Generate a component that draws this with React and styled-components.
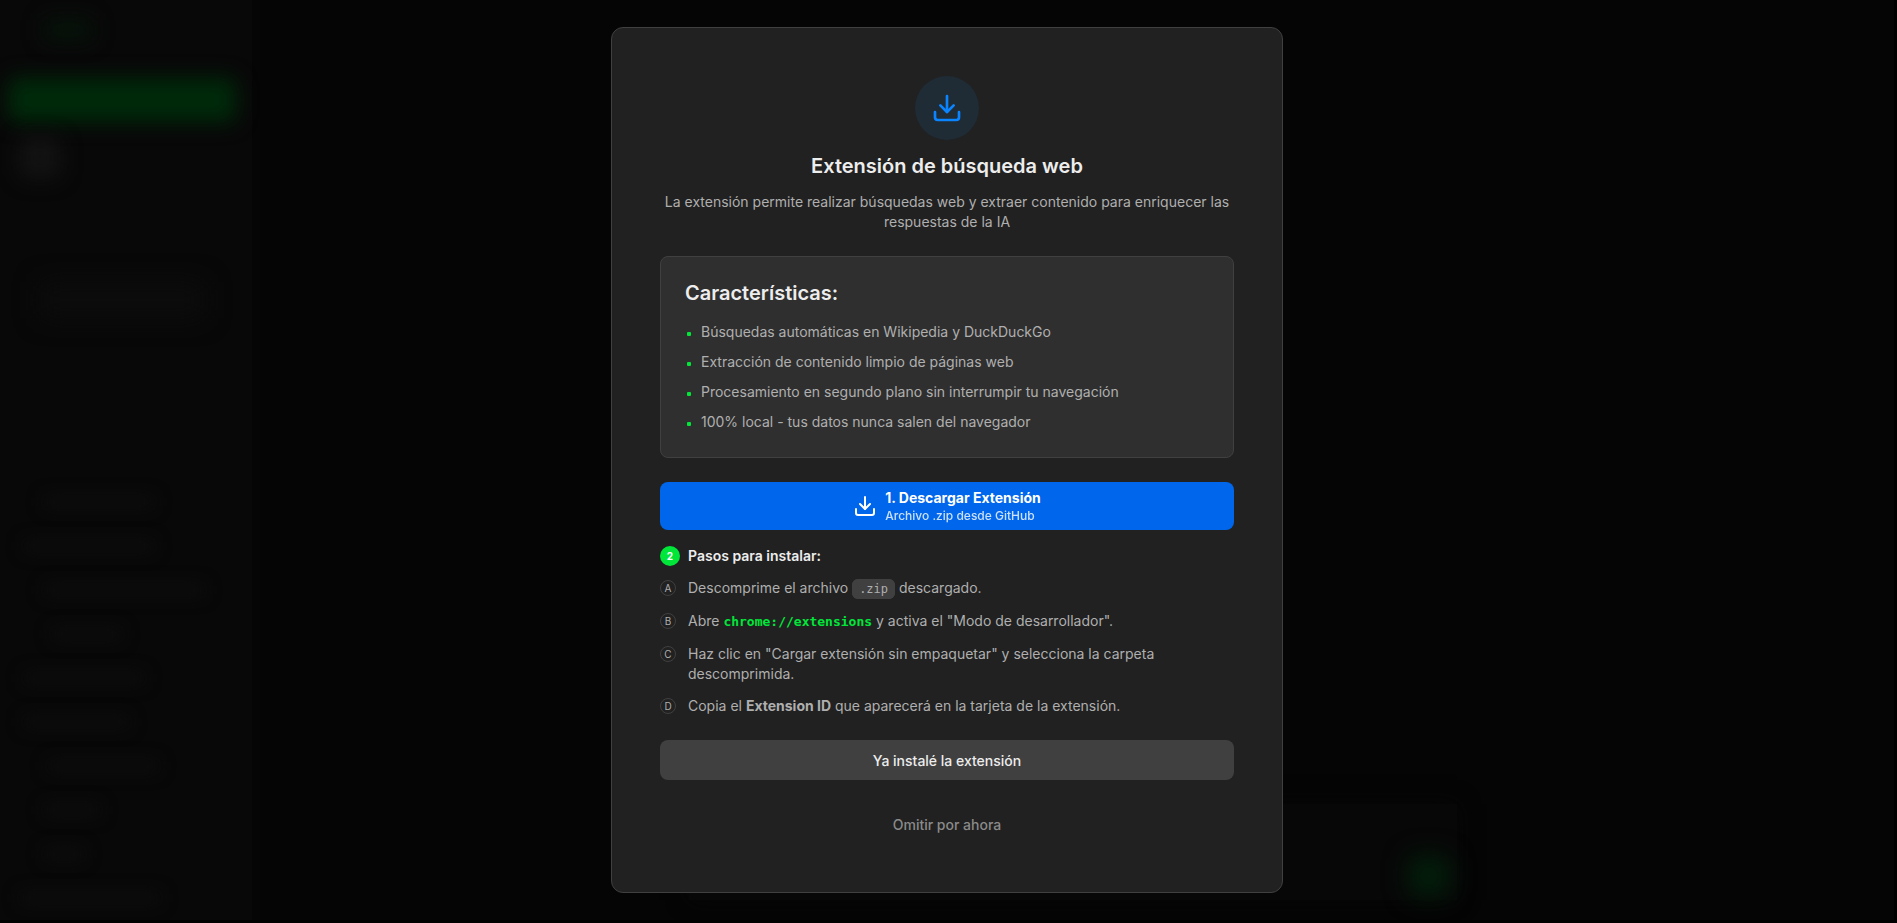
import styled, { createGlobalStyle } from "styled-components";
import { Download } from "lucide-react";

const features = [
  "Búsquedas automáticas en Wikipedia y DuckDuckGo",
  "Extracción de contenido limpio de páginas web",
  "Procesamiento en segundo plano sin interrumpir tu navegación",
  "100% local - tus datos nunca salen del navegador",
];

// widths and indents of the sidebar entries behind the overlay
const entries = [
  { indent: 28, width: 110 },
  { indent: 8, width: 130 },
  { indent: 28, width: 160 },
  { indent: 36, width: 70 },
  { indent: 8, width: 120 },
  { indent: 8, width: 105 },
  { indent: 32, width: 110 },
  { indent: 28, width: 56 },
  { indent: 28, width: 40 },
  { indent: 4, width: 140 },
];

export default function App() {
  return (
    <>
      <GlobalStyle />
      <Page>
        <Backdrop aria-hidden="true">
          <Sidebar>
            <Brand />
            <NewChat />
            <Avatar />
            <Search />
            <Entries>
              {entries.map((entry, index) => (
                <Entry key={index} $indent={entry.indent} $width={entry.width} />
              ))}
            </Entries>
          </Sidebar>
          <Chat>
            <Composer>
              <Send />
            </Composer>
          </Chat>
        </Backdrop>
        <Overlay>
          <Modal role="dialog" aria-modal="true" aria-labelledby="modal-title">
            <Header>
              <IconCircle>
                <Download size={32} />
              </IconCircle>
              <Title id="modal-title">Extensión de búsqueda web</Title>
              <Description>
                La extensión permite realizar búsquedas web y extraer contenido
                para enriquecer las respuestas de la IA
              </Description>
            </Header>
            <FeatureCard>
              <FeatureTitle>Características:</FeatureTitle>
              <FeatureList>
                {features.map((feature) => (
                  <Feature key={feature}>{feature}</Feature>
                ))}
              </FeatureList>
            </FeatureCard>
            <Install>
              <DownloadButton type="button">
                <Download size={24} />
                <DownloadText>
                  <DownloadTitle>1. Descargar Extensión</DownloadTitle>
                  <DownloadHint>Archivo .zip desde GitHub</DownloadHint>
                </DownloadText>
              </DownloadButton>
              <Steps>
                <StepsTitle>
                  <StepNumber>2</StepNumber>
                  Pasos para instalar:
                </StepsTitle>
                <StepList>
                  <Step>
                    <Letter>A</Letter>
                    <span>
                      Descomprime el archivo <Code>.zip</Code> descargado.
                    </span>
                  </Step>
                  <Step>
                    <Letter>B</Letter>
                    <span>
                      Abre <Address>chrome://extensions</Address> y activa el
                      &quot;Modo de desarrollador&quot;.
                    </span>
                  </Step>
                  <Step>
                    <Letter>C</Letter>
                    <span>
                      Haz clic en &quot;Cargar extensión sin empaquetar&quot; y
                      selecciona la carpeta descomprimida.
                    </span>
                  </Step>
                  <Step>
                    <Letter>D</Letter>
                    <span>
                      Copia el <strong>Extension ID</strong> que aparecerá en la
                      tarjeta de la extensión.
                    </span>
                  </Step>
                </StepList>
              </Steps>
            </Install>
            <Actions>
              <InstalledButton type="button">
                Ya instalé la extensión
              </InstalledButton>
              <SkipButton type="button">Omitir por ahora</SkipButton>
            </Actions>
          </Modal>
        </Overlay>
      </Page>
    </>
  );
}

const GlobalStyle = createGlobalStyle`
  *,
  *::before,
  *::after {
    box-sizing: border-box;
  }

  body {
    margin: 0;
    background-color: #000;
    color: #ededed;
    font-family: Inter, "Liberation Sans", sans-serif;
    font-size: 14px;
    line-height: 20px;
  }

  h2,
  h3,
  p,
  ul,
  ol {
    margin: 0;
    padding: 0;
    list-style: none;
  }

  button {
    font-family: inherit;
    cursor: pointer;
    border: none;
  }
`;

const Page = styled.div`
  display: grid;
  min-height: 100vh;
  padding: 0 3px 3px 0;
  overflow: hidden;
`;

const Backdrop = styled.div`
  grid-area: 1 / 1;
  display: grid;
  grid-template-columns: 252px 1fr;
  background-color: #050505;
  overflow: hidden;
`;

const Sidebar = styled.div`
  display: flex;
  flex-direction: column;
  padding: 20px 16px 0;
  background-color: #080808;
`;

const Brand = styled.div`
  width: 48px;
  height: 20px;
  margin-left: 28px;
  background-color: #06140a;
  filter: blur(10px);
`;

const NewChat = styled.div`
  height: 44px;
  margin: 38px 0 16px -8px;
  border-radius: 8px;
  background-color: #002a0a;
  filter: blur(10px);
`;

const Avatar = styled.div`
  width: 40px;
  height: 40px;
  margin-left: 4px;
  border-radius: 8px;
  background-color: #131313;
  filter: blur(10px);
`;

const Search = styled.div`
  height: 36px;
  margin: 104px 32px 0 24px;
  background-color: #0c0c0c;
  filter: blur(12px);
`;

const Entries = styled.div`
  display: flex;
  flex-direction: column;
  gap: 32px;
  margin-top: 178px;
`;

const Entry = styled.div`
  width: ${({ $width }) => $width}px;
  height: 12px;
  margin-left: ${({ $indent }) => $indent}px;
  background-color: #0d0d0d;
  filter: blur(8px);
`;

const Chat = styled.div`
  display: flex;
  align-items: flex-end;
  justify-content: center;
  padding-bottom: 20px;
`;

const Composer = styled.div`
  display: flex;
  align-items: flex-end;
  justify-content: flex-end;
  width: 768px;
  height: 96px;
  padding: 4px 8px;
  background-color: #070707;
  box-shadow: 0 0 20px #070707;
`;

const Send = styled.div`
  width: 40px;
  height: 40px;
  border-radius: 8px;
  background-color: #021f0b;
  filter: blur(12px);
`;

const Overlay = styled.div`
  grid-area: 1 / 1;
  position: relative;
  display: flex;
  align-items: center;
  justify-content: center;
  padding: 24px;
`;

const Modal = styled.div`
  width: 100%;
  max-width: 672px;
  padding: 48px;
  display: flex;
  flex-direction: column;
  gap: 24px;
  border: 1px solid #404040;
  border-radius: 12px;
  background-color: #212121;
`;

const Header = styled.div`
  display: flex;
  flex-direction: column;
  align-items: center;
  gap: 12px;
  text-align: center;
`;

const IconCircle = styled.div`
  display: flex;
  align-items: center;
  justify-content: center;
  width: 64px;
  height: 64px;
  border-radius: 50%;
  background-color: #1f2b35;
  color: #0a84ff;
`;

const Title = styled.h2`
  font-size: 20px;
  line-height: 28px;
  font-weight: 600;
  color: #ededed;
`;

const Description = styled.p`
  color: #afafaf;
`;

const FeatureCard = styled.div`
  padding: 24px;
  border: 1px solid #404040;
  border-radius: 8px;
  background-color: #2f2f2f;
`;

const FeatureTitle = styled.h3`
  margin-bottom: 16px;
  font-size: 20px;
  line-height: 24px;
  font-weight: 600;
`;

const FeatureList = styled.ul`
  display: flex;
  flex-direction: column;
  gap: 8px;
`;

const Feature = styled.li`
  display: flex;
  gap: 10px;
  padding-left: 2px;
  line-height: 22px;
  color: #afafaf;

  &::before {
    content: "";
    flex: none;
    width: 4px;
    height: 4px;
    margin-top: 11px;
    border-radius: 1px;
    background-color: #00e639;
  }
`;

const Install = styled.div`
  display: flex;
  flex-direction: column;
  gap: 16px;
`;

const DownloadButton = styled.button`
  display: flex;
  align-items: center;
  justify-content: center;
  gap: 8px;
  min-height: 48px;
  padding: 6px 16px;
  border-radius: 8px;
  background-color: #0066eb;
  color: white;
`;

const DownloadText = styled.span`
  display: flex;
  flex-direction: column;
  text-align: left;
`;

const DownloadTitle = styled.span`
  font-size: 14px;
  line-height: 20px;
  font-weight: 700;
`;

const DownloadHint = styled.span`
  font-size: 12px;
  line-height: 16px;
  font-weight: 500;
  opacity: 0.8;
`;

const Steps = styled.div`
  display: flex;
  flex-direction: column;
  gap: 12px;
`;

const StepsTitle = styled.h3`
  display: flex;
  align-items: center;
  gap: 8px;
  font-size: 14px;
  line-height: 20px;
  font-weight: 600;
`;

const StepNumber = styled.span`
  display: flex;
  align-items: center;
  justify-content: center;
  width: 20px;
  height: 20px;
  border-radius: 50%;
  background-color: #00e639;
  color: white;
  font-size: 10px;
  font-weight: 700;
`;

const StepList = styled.ol`
  display: flex;
  flex-direction: column;
  gap: 12px;
  color: #afafaf;
`;

const Step = styled.li`
  display: flex;
  gap: 12px;

  strong {
    font-weight: 700;
  }
`;

const Letter = styled.span`
  flex: none;
  display: flex;
  align-items: center;
  justify-content: center;
  width: 16px;
  height: 16px;
  margin-top: 2px;
  border: 1px solid #404040;
  border-radius: 50%;
  font-size: 10px;
  line-height: 12px;
`;

const Code = styled.code`
  padding: 2px 6px;
  border: 1px solid #404040;
  border-radius: 6px;
  background-color: #404040;
  font-family: "DejaVu Sans Mono", monospace;
  font-size: 12px;
`;

const Address = styled.code`
  font-family: "DejaVu Sans Mono", monospace;
  font-size: 13px;
  font-weight: 700;
  color: #00e639;
`;

const Actions = styled.div`
  display: flex;
  flex-direction: column;
  gap: 24px;
`;

const InstalledButton = styled.button`
  height: 40px;
  border-radius: 8px;
  background-color: #404040;
  color: #ededed;
  font-size: 14px;
  font-weight: 500;
`;

const SkipButton = styled.button`
  height: 40px;
  background-color: transparent;
  color: #8a8a8a;
  font-size: 14px;
  font-weight: 500;
`;
